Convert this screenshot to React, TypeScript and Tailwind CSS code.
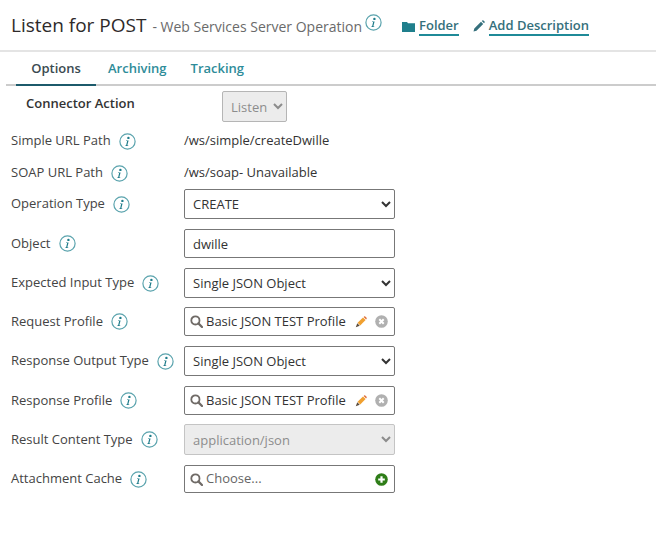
import React from "react";

const font = "[font-family:'Open_Sans',sans-serif]";

function Info({ size = 17 }: { size?: number }) {
  return (
    <svg width={size} height={size} viewBox="0 0 17 17" className="shrink-0" fill="none">
      <circle cx="8.5" cy="8.5" r="7.6" stroke="#5aa3ad" strokeWidth="1.2" />
      <circle cx="9.4" cy="4.9" r="1.2" fill="#1f7c8a" />
      <path d="M7 7.4h2.6l-1.2 4.6c-.1.4.1.5.9.4v.6H6.2c0 0 0-.5 0-.5.6 0 .9-.2 1-.6l.9-3.6c0-.2-.3-.4-1.1-.4z" fill="#1f7c8a" />
    </svg>
  );
}

function Search() {
  return (
    <svg width="13" height="13" viewBox="0 0 13 13" fill="none" className="shrink-0">
      <circle cx="5.4" cy="5.4" r="4.1" stroke="#6f6a66" strokeWidth="1.8" />
      <path d="M8.4 8.4l3.6 3.6" stroke="#6f6a66" strokeWidth="2.2" strokeLinecap="round" />
    </svg>
  );
}

function Pencil() {
  return (
    <svg width="12" height="12" viewBox="0 0 12 12" className="shrink-0">
      <path d="M2.6 6.8L8 1.4l2.6 2.6L5.2 9.4z" fill="#f0a030" />
      <path d="M8.6 0.9l.6-.5c.3-.3.7-.3 1 0l1.4 1.4c.3.3.3.7 0 1l-.5.6z" fill="#e0703a" />
      <path d="M2.3 7.3l2.4 2.4L0.8 11.2z" fill="#5a4a3a" />
    </svg>
  );
}

function Clear() {
  return (
    <svg width="13" height="13" viewBox="0 0 13 13" className="shrink-0">
      <circle cx="6.5" cy="6.5" r="6.3" fill="#b0b0b0" />
      <path d="M4.3 4.3l4.4 4.4M8.7 4.3l-4.4 4.4" stroke="#fff" strokeWidth="2" />
    </svg>
  );
}

function Plus() {
  return (
    <svg width="13" height="13" viewBox="0 0 13 13" className="shrink-0">
      <circle cx="6.5" cy="6.5" r="6.3" fill="#2e7d18" />
      <path d="M6.5 3.2v6.6M3.2 6.5h6.6" stroke="#fff" strokeWidth="2.2" />
    </svg>
  );
}

function Row({ label, gap, h, mb, children }: { label: string; gap: string; h: string; mb: string; children: React.ReactNode }) {
  return (
    <div className={`flex items-center ${h} ${mb}`}>
      <div className="w-[173px] flex items-center text-[13px] text-[#444444]">
        <span>{label}</span>
        <span className={gap}>
          <Info />
        </span>
      </div>
      {children}
    </div>
  );
}

function Sel({ value, disabled }: { value: string; disabled?: boolean }) {
  return (
    <select
      disabled={disabled}
      defaultValue={value}
      className={
        disabled
          ? "w-[211px] h-full border border-[#c4c4c4] rounded-[2px] bg-[#ececec] pl-[4px] text-[13px] text-[#8c8c8c] " + font
          : "w-[211px] h-full border border-[#777] rounded-[2px] bg-white pl-[4px] text-[13px] text-[#333] " + font
      }
    >
      <option>{value}</option>
    </select>
  );
}

function Lookup({ text, muted, children }: { text: string; muted?: boolean; children: React.ReactNode }) {
  return (
    <div className="w-[211px] h-full border border-[#777] rounded-[2px] bg-white flex items-center pl-[5px] pr-[6px]">
      <Search />
      <span className={`ml-[3px] flex-1 text-[13px] ${muted ? "text-[#666]" : "text-[#333]"}`}>{text}</span>
      {children}
    </div>
  );
}

export default function App() {
  return (
    <div className={`w-[656px] h-[536px] bg-white overflow-hidden ${font}`}>
      <div className="h-[52px] border-b-2 border-[#e4e4e4] flex items-center pl-[11px]">
        <span className="text-[19px] text-[#2e2a2a]">Listen for POST</span>
        <span className="ml-[6px] mt-[2px] text-[14px] text-[#6a6a6a]">- Web Services Server Operation</span>
        <span className="ml-[3px] mb-[5px]">
          <Info />
        </span>
        <span className="ml-[20px] mt-[2px] flex items-center">
          <svg width="13" height="11" viewBox="0 0 13 11">
            <path d="M0 1h5l1 1.2h7V11H0z" fill="#1f7f8c" />
          </svg>
          <span className="ml-[4px] text-[13px] font-semibold text-[#35707c] border-b-2 border-[#1f8a98] leading-[18px]">Folder</span>
        </span>
        <span className="ml-[14px] mt-[2px] flex items-center">
          <svg width="12" height="12" viewBox="0 0 12 12">
            <path d="M0.5 11.5l.8-3L8 1.8l2.2 2.2-6.7 6.7zM8.8 1l.6-.6c.3-.3.7-.3 1 0l1.2 1.2c.3.3.3.7 0 1l-.6.6z" fill="#35707c" />
          </svg>
          <span className="ml-[4px] text-[13px] font-semibold text-[#35707c] border-b-2 border-[#1f8a98] leading-[18px]">Add Description</span>
        </span>
      </div>

      <div className="h-[34px] ml-[6px] flex border-b-2 border-[#cccccc] text-[13px] font-semibold">
        <div className="ml-[10px] w-[80px] h-[34px] pt-[1px] flex items-center justify-center border-b-2 border-[#1c5a6b] text-[#3a4a50]">Options</div>
        <div className="ml-[12px] h-[32px] pt-[2px] flex items-center text-[#2e8c99]">Archiving</div>
        <div className="ml-[24px] h-[32px] pt-[2px] flex items-center text-[#2e8c99]">Tracking</div>
      </div>

      <div className="flex items-center h-[31px] mt-[5px] mb-[7px]">
        <div className="w-[222px] pl-[26px] mb-[6px] text-[13px] font-semibold text-[#333]">Connector Action</div>
        <select disabled defaultValue="Listen" className={`w-[65px] h-[31px] border border-[#b5b5b5] rounded-[2px] bg-[#ececec] pl-[4px] text-[13px] text-[#8c8c8c] ${font}`}>
          <option>Listen</option>
        </select>
      </div>

      <div className="pl-[11px] flex flex-col">
        <Row label="Simple URL Path" gap="ml-[8px]" h="h-[24px]" mb="mb-[8px]">
          <span className="text-[13px] text-[#333]">/ws/simple/createDwille</span>
        </Row>
        <Row label="SOAP URL Path" gap="ml-[8px]" h="h-[24px]" mb="mb-[4px]">
          <span className="text-[13px] text-[#333]">/ws/soap- Unavailable</span>
        </Row>
        <Row label="Operation Type" gap="ml-[8px]" h="h-[30px]" mb="mb-[10px]">
          <Sel value="CREATE" />
        </Row>
        <Row label="Object" gap="ml-[8px]" h="h-[29px]" mb="mb-[10px]">
          <input readOnly value="dwille" className="w-[211px] h-full border border-[#777] rounded-[2px] pl-[8px] text-[13px] text-[#333]" />
        </Row>
        <Row label="Expected Input Type" gap="ml-[8px]" h="h-[30px]" mb="mb-[9px]">
          <Sel value="Single JSON Object" />
        </Row>
        <Row label="Request Profile" gap="ml-[8px]" h="h-[29px]" mb="mb-[10px]">
          <Lookup text="Basic JSON TEST Profile">
            <Pencil />
            <span className="ml-[8px]">
              <Clear />
            </span>
          </Lookup>
        </Row>
        <Row label="Response Output Type" gap="ml-[8px]" h="h-[30px]" mb="mb-[10px]">
          <Sel value="Single JSON Object" />
        </Row>
        <Row label="Response Profile" gap="ml-[8px]" h="h-[29px]" mb="mb-[9px]">
          <Lookup text="Basic JSON TEST Profile">
            <Pencil />
            <span className="ml-[8px]">
              <Clear />
            </span>
          </Lookup>
        </Row>
        <Row label="Result Content Type" gap="ml-[8px]" h="h-[31px]" mb="mb-[10px]">
          <Sel value="application/json" disabled />
        </Row>
        <Row label="Attachment Cache" gap="ml-[8px]" h="h-[28px]" mb="mb-0">
          <Lookup text="Choose..." muted>
            <Plus />
          </Lookup>
        </Row>
      </div>
    </div>
  );
}
